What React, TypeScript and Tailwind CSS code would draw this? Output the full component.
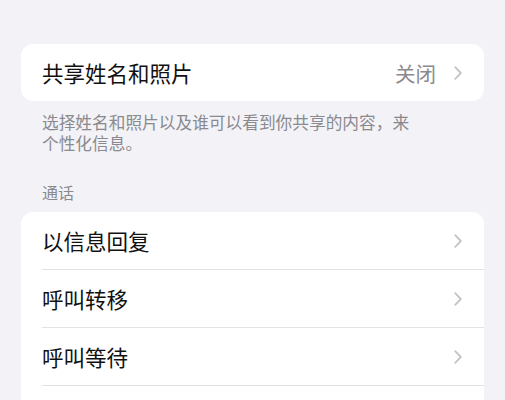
import React from 'react';

const Chevron = () => (
  <svg width="8" height="14" viewBox="0 0 8 14" fill="none">
    <path d="M1.2 1.2L6.8 7L1.2 12.8" stroke="#c4c4c8" strokeWidth="1.8" strokeLinecap="round" strokeLinejoin="round" />
  </svg>
);

const Row = ({ label, value, last }: { label: string; value?: string; last?: boolean }) => (
  <div className="pl-[21px]">
    <div className={`flex items-center h-[58px] pr-[22px] ${last ? '' : 'border-b border-[#e3e3e6]'}`}>
      <span className="flex-1 text-[21.5px] leading-[28px] text-[#111]">{label}</span>
      {value && <span className="text-[20px] leading-[28px] text-[#8a8a8e] mr-[18px]">{value}</span>}
      <Chevron />
    </div>
  </div>
);

export default function App() {
  return (
    <div
      className="w-[505px] h-[400px] overflow-hidden bg-[#f2f2f7] pt-[44px] px-[21px]"
      style={{ fontFamily: '"Noto Sans CJK SC", "Noto Sans", sans-serif' }}
    >
      {/* Share name & photo */}
      <div className="bg-white rounded-[12px] overflow-hidden">
        <div className="flex items-center h-[57px] pl-[21px] pr-[22px]">
          <span className="flex-1 text-[21.5px] leading-[28px] text-[#111]">共享姓名和照片</span>
          <span className="text-[20.5px] leading-[28px] text-[#8a8a8e] mr-[18px]">关闭</span>
          <Chevron />
        </div>
      </div>
      <p className="mt-[11px] pl-[21px] text-[16.7px] leading-[21px] text-[#8a8a8e]">
        选择姓名和照片以及谁可以看到你共享的内容，来
        <br />
        个性化信息。
      </p>

      {/* Calls */}
      <div className="mt-[28px] pl-[21px] text-[16px] leading-[20px] text-[#8a8a8e]">通话</div>
      <div className="mt-[10px] bg-white rounded-[12px] overflow-hidden">
        <Row label="以信息回复" />
        <Row label="呼叫转移" />
        <Row label="呼叫等待" />
        <div className="h-[58px]" />
      </div>
    </div>
  );
}
